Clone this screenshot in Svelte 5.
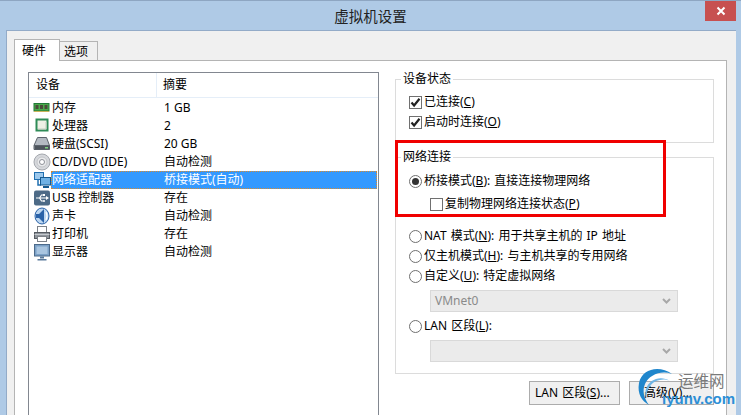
<script>
	const devices = [
		{ icon: 'ram', name: '内存', summary: '1 GB' },
		{ icon: 'cpu', name: '处理器', summary: '2' },
		{ icon: 'disk', name: '硬盘(SCSI)', summary: '20 GB' },
		{ icon: 'cd', name: 'CD/DVD (IDE)', summary: '自动检测' },
		{ icon: 'net', name: '网络适配器', summary: '桥接模式(自动)', selected: true },
		{ icon: 'usb', name: 'USB 控制器', summary: '存在' },
		{ icon: 'sound', name: '声卡', summary: '自动检测' },
		{ icon: 'printer', name: '打印机', summary: '存在' },
		{ icon: 'display', name: '显示器', summary: '自动检测' }
	];
</script>

{#snippet check(on)}
	<span class="box">
		{#if on}
			<svg width="11" height="11" viewBox="0 0 11 11"><path d="M1.5 5.5l2.6 3L9.5 1.8" fill="none" stroke="#222" stroke-width="2.2" /></svg>
		{/if}
	</span>
{/snippet}

{#snippet radio(on)}
	<span class="radio" class:on></span>
{/snippet}

{#snippet chevron()}
	<svg class="chevron" width="9" height="6" viewBox="0 0 9 6"><path d="M1 1l3.5 3.5L8 1" fill="none" stroke="#a8a8a8" stroke-width="2" /></svg>
{/snippet}

<div class="window">
	<header class="titlebar">
		<span class="title">虚拟机设置</span>
		<span class="close">
			<svg width="10" height="10" viewBox="0 0 10 10"><path d="M1.5 1.5l7 7M8.5 1.5l-7 7" stroke="#fff" stroke-width="2" /></svg>
		</span>
	</header>

	<div class="client">
		<div class="tabs">
			<span class="tab active">硬件</span>
			<span class="tab">选项</span>
		</div>

		<div class="panel">
			<div class="list">
				<div class="list-head">
					<span class="col-device">设备</span>
					<span class="col-summary">摘要</span>
				</div>
				{#each devices as d}
					<div class="row">
						<svg class="icon" width="18" height="18" viewBox="0 0 18 18">
							{#if d.icon === 'ram'}
								<rect x="1" y="4.500" width="15" height="7.500" fill="#4aa84a" stroke="#1f7a35" />
								<rect x="2.500" y="6" width="3" height="4" fill="#4a4a3a" />
								<rect x="7" y="6" width="3" height="4" fill="#4a4a3a" />
								<rect x="11.500" y="6" width="3" height="4" fill="#4a4a3a" />
								<path d="M1 12.500h15" stroke="#c9b25a" />
							{:else if d.icon === 'cpu'}
								<rect x="3.500" y="2.500" width="11" height="11" fill="#eef0e6" stroke="#2e8b57" stroke-width="2" />
								<path d="M5 12h8V5" fill="none" stroke="#c4ccc0" />
							{:else if d.icon === 'disk'}
								<path d="M4.500 2.500h9l3 8v4H1v-4z" fill="#b4bac2" stroke="#5c636c" />
								<path d="M1 10.500h16" stroke="#5c636c" />
								<rect x="1.500" y="11" width="15" height="3.500" fill="#4d545c" />
								<rect x="12" y="12" width="3" height="1.500" fill="#7fd07f" />
							{:else if d.icon === 'cd'}
								<circle cx="9" cy="9" r="8" fill="#d6d8dc" stroke="#a5a8ae" />
								<circle cx="9" cy="9" r="5" fill="#e9eaec" stroke="#c2c4c8" />
								<circle cx="9" cy="9" r="2.500" fill="#fff" stroke="#8e9198" />
							{:else if d.icon === 'net'}
								<rect x="1.500" y="1.500" width="9" height="7" fill="#9cc8ec" stroke="#1f6fb0" />
								<path d="M5 9v5h3" fill="none" stroke="#1f6fb0" stroke-width="1.500" />
								<rect x="7.500" y="6.500" width="10" height="7.500" fill="#6fb1e4" stroke="#14598f" />
								<path d="M10 16h6" stroke="#14598f" stroke-width="2" />
							{:else if d.icon === 'usb'}
								<rect x="1" y="1.500" width="16" height="15" rx="2" fill="#4d6a86" />
								<path d="M3 9h11M6.500 9l2-3h2M6.500 9l2 3h2" fill="none" stroke="#fff" stroke-width="1.200" />
								<path d="M13 7l3 2-3 2z" fill="#fff" />
								<rect x="10" y="5" width="2" height="2" fill="#fff" />
								<circle cx="11" cy="12" r="1" fill="#fff" />
							{:else if d.icon === 'sound'}
								<ellipse cx="9" cy="9" rx="7" ry="8" fill="#bcd6f0" stroke="#2a62a8" />
								<path d="M3 7h3l5-5v14l-5-5H3z" fill="#2a62a8" />
								<path d="M13 5q2 4 0 8" fill="none" stroke="#fff" stroke-width="1.200" />
							{:else if d.icon === 'printer'}
								<rect x="4.500" y="1.500" width="9" height="6" fill="#fff" stroke="#7c8188" />
								<rect x="1.500" y="7.500" width="15" height="6" fill="#8f959c" stroke="#565b62" />
								<rect x="4.500" y="11.500" width="9" height="5" fill="#fff" stroke="#7c8188" />
								<path d="M1.500 9.500h15" stroke="#c5c9ce" />
							{:else}
								<rect x="1.500" y="1.500" width="15" height="11.500" fill="#7ba0c6" stroke="#4c6a8a" />
								<rect x="3.500" y="3.500" width="11" height="7.500" fill="#a9c5e0" />
								<path d="M7 13.500h4v2H7zM4.500 16h9v1.500h-9z" fill="#5b7a9b" />
							{/if}
						</svg>
						<div class="cells" class:selected={d.selected}>
							<span class="name">{d.name}</span>
							<span class="value">{d.summary}</span>
						</div>
					</div>
				{/each}
			</div>

			<div class="side">
				<fieldset class="status">
					<legend>设备状态</legend>
					<label>{@render check(true)}已连接(<u>C</u>)</label>
					<label>{@render check(true)}启动时连接(<u>O</u>)</label>
				</fieldset>

				<fieldset class="network">
					<legend>网络连接</legend>
					<label class="bridge">{@render radio(true)}桥接模式(<u>B</u>): 直接连接物理网络</label>
					<label class="sub replicate">{@render check(false)}复制物理网络连接状态(<u>P</u>)</label>
					<label class="nat">{@render radio(false)}NAT 模式(<u>N</u>): 用于共享主机的 IP 地址</label>
					<label>{@render radio(false)}仅主机模式(<u>H</u>): 与主机共享的专用网络</label>
					<label>{@render radio(false)}自定义(<u>U</u>): 特定虚拟网络</label>
					<div class="select">VMnet0{@render chevron()}</div>
					<label class="lan">{@render radio(false)}LAN 区段(<u>L</u>):</label>
					<div class="select">{@render chevron()}</div>
				</fieldset>

				<div class="buttons">
					<span class="button lan-btn">LAN 区段(<u>S</u>)...</span>
					<span class="button adv-btn">高级(<u>V</u>)...</span>
				</div>
			</div>
		</div>
	</div>

	<div class="callout"></div>

	<div class="watermark">
		<svg width="50" height="45" viewBox="0 0 50 45">
			<path d="M40 11C28 2 10 5 7 20 5 31 10 38 17 42 12 35 10 28 13 21 17 12 29 7 40 11z" fill="#1f86cc" />
			<path d="M38 18C29 12 17 16 14 26 13 30 13 32 14 34 15 27 18 21 24 18 29 16 34 16 38 18z" fill="#6fb5e4" />
		</svg>
		<span class="wm-cn">运维网</span>
		<span class="wm-en">iyunv.com</span>
	</div>
</div>

<style>
	:global(body) {
		background: #afcae6;
	}
	.window {
		position: relative;
		width: 741px;
		height: 415px;
		overflow: hidden;
		display: flex;
		flex-direction: column;
		box-sizing: border-box;
		border-top: 1px solid #8ea6c2;
		background: #afcae6;
		color: #000;
		font-family: 'Noto Sans', 'Noto Sans CJK SC', sans-serif;
		font-size: 12px;
		line-height: 18px;
	}
	.titlebar {
		height: 29px;
		flex: none;
		display: flex;
		justify-content: center;
		position: relative;
	}
	.title {
		font-size: 14.500px;
		line-height: 30px;
		color: #222;
	}
	.close {
		position: absolute;
		top: 0;
		right: 5px;
		width: 31px;
		height: 20px;
		background: #c75050;
		display: flex;
		align-items: center;
		justify-content: center;
	}
	.client {
		flex: 1;
		min-height: 0;
		margin: 0 5px 0 6px;
		padding: 8px 9px 0 7px;
		background: #f0f0f0;
		border-left: 1px solid #93abc8;
		border-top: 1px solid #93abc8;
		display: flex;
		flex-direction: column;
	}
	.tabs {
		display: flex;
		align-items: flex-end;
		height: 22px;
		flex: none;
		margin-bottom: -1px;
		position: relative;
		z-index: 1;
	}
	.tab {
		box-sizing: border-box;
		width: 38px;
		height: 20px;
		padding-left: 4px;
		border: 1px solid #b4b4b4;
		border-left: none;
		line-height: 19px;
	}
	.tab.active {
		width: 46px;
		height: 22px;
		padding-left: 7px;
		background: #fff;
		border-left: 1px solid #b4b4b4;
		border-bottom: none;
		line-height: 22px;
	}
	.panel {
		flex: 1;
		min-height: 0;
		background: #fff;
		border: 1px solid #b4b4b4;
		border-bottom: none;
		display: flex;
		padding: 11px 12px 0 13px;
		gap: 16px;
	}
	.list {
		box-sizing: border-box;
		width: 351px;
		height: 400px;
		flex: none;
		border: 1px solid #828790;
	}
	.list-head {
		display: flex;
		height: 25px;
		box-sizing: border-box;
		border-bottom: 1px solid #e5eef8;
		line-height: 24px;
		margin-bottom: 1px;
	}
	.col-device {
		width: 128px;
		box-sizing: border-box;
		padding-left: 7px;
		border-right: 1px solid #e5eef8;
	}
	.col-summary {
		padding-left: 6px;
	}
	.row {
		display: flex;
		height: 18px;
		padding-left: 4px;
	}
	.icon {
		flex: none;
		width: 18px;
		height: 18px;
	}
	.cells {
		flex: 1;
		display: flex;
		box-sizing: border-box;
		margin-right: 1px;
		border: 1px dotted transparent;
		line-height: 16px;
	}
	.cells.selected {
		background: #3399ff;
		color: #fff;
		border-color: #d98a2e;
	}
	.name {
		width: 112px;
		flex: none;
	}
	.side {
		flex: 1;
		min-width: 0;
		display: flex;
		flex-direction: column;
	}
	fieldset {
		margin: 0;
		padding: 0 0 0 13px;
		border: 1px solid #dcdcdc;
		min-width: 0;
	}
	legend {
		padding: 0 2px;
		margin-left: -8px;
		line-height: 16px;
	}
	label {
		display: flex;
		align-items: center;
		height: 20px;
		word-spacing: 1px;
	}
	.status {
		box-sizing: border-box;
		height: 72px;
		margin-top: -1px;
		padding-top: 5px;
	}
	.network {
		box-sizing: border-box;
		height: 225px;
		margin-top: 6px;
	}
	.bridge {
		margin-top: 6px;
	}
	.sub {
		margin-left: 21px;
		margin-top: 3px;
	}
	.nat {
		margin-top: 12px;
	}
	.lan {
		margin-top: 4px;
	}
	.box,
	.radio {
		box-sizing: border-box;
		flex: none;
		width: 13px;
		height: 13px;
		margin-right: 2px;
		background: #fff;
		border: 1px solid #707070;
		display: flex;
		align-items: center;
		justify-content: center;
	}
	.radio {
		border-radius: 50%;
	}
	.radio.on::after {
		content: '';
		width: 7px;
		height: 7px;
		border-radius: 50%;
		background: #333;
	}
	.select {
		box-sizing: border-box;
		width: 248px;
		height: 22px;
		margin: 4px 0 0 21px;
		padding: 0 4px;
		display: flex;
		align-items: center;
		background: #ebebeb;
		border: 1px solid #d9d9d9;
		color: #8a8a8a;
	}
	.chevron {
		margin-left: auto;
		margin-right: 2px;
	}
	.buttons {
		display: flex;
		justify-content: flex-end;
		gap: 9px;
		margin-top: 7px;
	}
	.button {
		box-sizing: border-box;
		height: 24px;
		line-height: 22px;
		border: 1px solid #acacac;
		background: #f0f0f0;
		word-spacing: 1px;
	}
	.lan-btn {
		width: 91px;
		padding-left: 5px;
	}
	.adv-btn {
		width: 85px;
		padding-left: 14px;
	}
	.callout {
		position: absolute;
		left: 395px;
		top: 139px;
		width: 271px;
		height: 77px;
		box-sizing: border-box;
		border: 3px solid #f00000;
		pointer-events: none;
	}
	.watermark {
		position: absolute;
		left: 632px;
		top: 362px;
		width: 109px;
		height: 53px;
		pointer-events: none;
	}
	.watermark svg {
		position: absolute;
		left: 0;
		top: 0;
	}
	.wm-cn {
		position: absolute;
		left: 46px;
		top: 8px;
		font-size: 15.500px;
		line-height: 20px;
		color: #7a7a7a;
		white-space: nowrap;
	}
	.wm-en {
		position: absolute;
		left: 30px;
		top: 25px;
		font-family: 'Liberation Sans', sans-serif;
		font-size: 15px;
		font-weight: 700;
		line-height: 22px;
		color: #2c8fd6;
		white-space: nowrap;
	}
</style>
